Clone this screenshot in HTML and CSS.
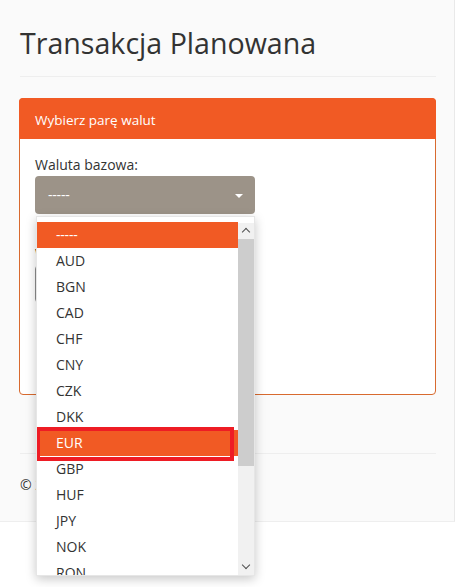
FILE: index.html
```html
<!DOCTYPE html>
<html lang="pl">
<head>
<meta charset="utf-8">
<title>Transakcja Planowana</title>
<link rel="stylesheet" href="styles.css">
</head>
<body>
<div class="page">
  <div class="container">
    <h1 class="title">Transakcja Planowana</h1>
    <hr class="rule">
    <div class="panel">
      <div class="panel-heading">Wybierz parę walut</div>
      <div class="panel-body">
        <div class="field">
          <label class="label">Waluta bazowa:</label>
          <div class="select-wrap">
            <div class="select"><span class="dashes">-----</span><span class="caret"></span></div>
            <div class="dropdown">
              <ul class="options">
                <li class="option active"><span class="dashes">-----</span></li>
                <li class="option">AUD</li>
                <li class="option">BGN</li>
                <li class="option">CAD</li>
                <li class="option">CHF</li>
                <li class="option">CNY</li>
                <li class="option">CZK</li>
                <li class="option">DKK</li>
                <li class="option active marked">EUR</li>
                <li class="option">GBP</li>
                <li class="option">HUF</li>
                <li class="option">JPY</li>
                <li class="option">NOK</li>
                <li class="option">RON</li>
              </ul>
              <div class="scrollbar">
                <div class="sb-arrow sb-up"></div>
                <div class="sb-track"><div class="sb-thumb"></div></div>
                <div class="sb-arrow sb-down"></div>
              </div>
            </div>
          </div>
        </div>
        <div class="field field-second">
          <label class="label">Waluta kwotowana:</label>
          <div class="select select-plain"></div>
        </div>
      </div>
    </div>
    <hr class="rule footer-rule">
    <footer class="footer">© 2024 Kantor</footer>
  </div>
</div>
</body>
</html>
```

FILE: styles.css
```css
*, *::before, *::after { box-sizing: border-box; }
html, body { margin: 0; padding: 0; background: #fff; }
body {
  min-height: 587px;
  font-family: "Open Sans", "Noto Sans", sans-serif;
  font-size: 14px;
  color: #333;
}
.page {
  width: 455px;
  height: 522px;
  background: #fafafa;
  border-right: 1px solid #e9e9e9;
  border-bottom: 1px solid #eeeeee;
}
.container {
  padding: 0 18px 0 19px;
}
.title {
  margin: 0;
  padding-top: 24px;
  font-size: 28.6px;
  font-weight: 400;
  line-height: 37px;
  color: #333;
  padding-left: 1px;
}
.rule {
  margin: 15px 0 0 1px;
  border: 0;
  border-top: 1px solid #eeeeee;
  height: 0;
}
.panel {
  margin-top: 21px;
  border: 1px solid #d86a2f;
  border-radius: 4px;
  background: #fff;
}
.panel-heading {
  height: 41px;
  margin: -1px -1px 0 -1px;
  padding: 0 16px;
  background: #f15a24;
  color: #fff;
  font-size: 13.5px;
  line-height: 44px;
  border-radius: 4px 4px 0 0;
}
.panel-body {
  height: 255px;
  padding: 16px 15px;
}
.label {
  display: block;
  line-height: 20px;
  margin-bottom: 1px;
}
.select-wrap {
  position: relative;
  width: 220px;
}
.select {
  position: relative;
  width: 220px;
  height: 38px;
  background: #9c9388;
  border-radius: 4px;
  color: #fff;
  padding-left: 13px;
  line-height: 38px;
}
.dashes { letter-spacing: -0.2px; }
.caret {
  position: absolute;
  right: 12px;
  top: 18px;
  width: 0;
  height: 0;
  border-left: 4px solid transparent;
  border-right: 4px solid transparent;
  border-top: 4px solid #fff;
}
.field-second { margin-top: 30px; }
.select-plain {
  background: #fff;
  border: 1px solid #8d8d8d;
}
.dropdown {
  position: absolute;
  z-index: 5;
  top: 40px;
  left: 1px;
  width: 219px;
  height: 360px;
  background: #fff;
  border: 1px solid #e6e6e6;
  box-shadow: 0 3px 10px rgba(0, 0, 0, 0.22);
  display: flex;
  overflow: hidden;
}
.options {
  list-style: none;
  margin: 0;
  padding: 5px 0 0 0;
  width: 201px;
  flex: none;
}
.option {
  height: 26px;
  line-height: 26px;
  padding-left: 19px;
  color: #333;
  font-size: 14px;
}
.option.active {
  background: #f15a24;
  color: #fff;
}
.option.marked {
  position: relative;
}
.option.marked::after {
  content: "";
  position: absolute;
  left: -1px;
  top: -3px;
  width: 198px;
  height: 34px;
  border: 4px solid #ee1c24;
}
.scrollbar {
  width: 16px;
  flex: none;
  display: flex;
  flex-direction: column;
  background: #f1f1f1;
  margin-top: 6px;
}
.sb-arrow {
  height: 16px;
  position: relative;
  background: #f1f1f1;
}
.sb-up::before, .sb-down::before {
  content: "";
  position: absolute;
  left: 5px;
  width: 6px;
  height: 6px;
  border-left: 1.6px solid #505050;
  border-top: 1.6px solid #505050;
}
.sb-up::before { top: 6px; transform: rotate(45deg); }
.sb-down::before { top: 3px; transform: rotate(225deg); }
.sb-track {
  flex: 1;
  position: relative;
}
.sb-thumb {
  height: 227px;
  background: #cdcdcd;
}
.footer-rule { margin-top: 58px; }
.footer {
  margin-top: 21px;
  line-height: 20px;
  padding-left: 1px;
}
```
